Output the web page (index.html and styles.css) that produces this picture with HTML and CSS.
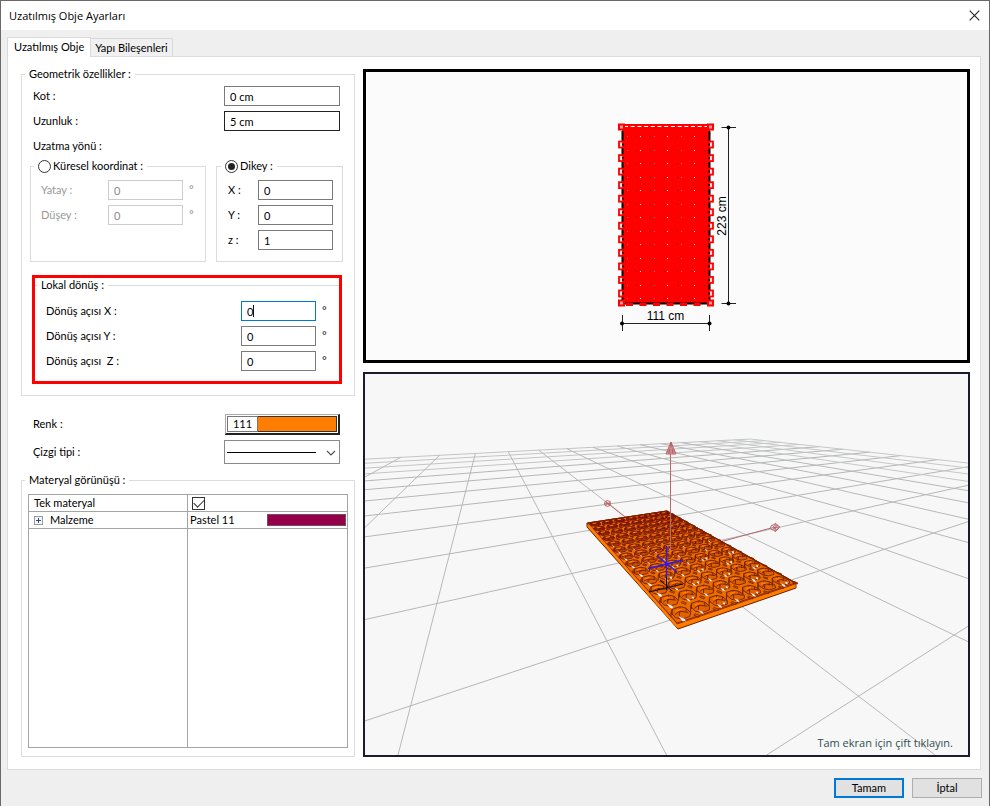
FILE: index.html
```html
<!DOCTYPE html>
<html lang="tr">
<head>
<meta charset="utf-8">
<title>Uzatılmış Obje Ayarları</title>
<link rel="stylesheet" href="styles.css">
</head>
<body>
<main class="dialog">
  <header class="titlebar">
    <h1 class="title">Uzatılmış Obje Ayarları</h1>
    <button class="close" type="button" aria-label="Kapat"><svg width="11" height="11" viewBox="0 0 11 11"><path d="M.7.7l9.6 9.6M10.3.7L.7 10.3" fill="none" stroke="#222" stroke-width="1.1"/></svg></button>
  </header>
  <nav class="tabs" role="tablist">
    <button class="tab tab-active" type="button" role="tab" aria-selected="true">Uzatılmış Obje</button>
    <button class="tab" type="button" role="tab" aria-selected="false">Yapı Bileşenleri</button>
  </nav>
  <div class="page">
    <form class="form">
      <fieldset class="group geometry">
        <legend>Geometrik özellikler :</legend>
        <div class="row"><label for="kot">Kot :</label><input class="wide" id="kot" type="text" value="0 cm"></div>
        <div class="row"><label for="uzunluk">Uzunluk :</label><input class="wide strong" id="uzunluk" type="text" value="5 cm"></div>
        <div class="row">Uzatma yönü :</div>
        <div class="directions">
          <fieldset class="group spherical">
            <legend><label class="choice"><input type="radio" name="yon">Küresel koordinat :</label></legend>
            <div class="field"><label for="yatay">Yatay :</label><input id="yatay" type="text" value="0" disabled><span class="degree">°</span></div>
            <div class="field"><label for="dusey">Düşey :</label><input id="dusey" type="text" value="0" disabled><span class="degree">°</span></div>
          </fieldset>
          <fieldset class="group vertical">
            <legend><label class="choice"><input type="radio" name="yon" checked>Dikey :</label></legend>
            <div class="field"><label for="vx">X :</label><input id="vx" type="text" value="0"></div>
            <div class="field"><label for="vy">Y :</label><input id="vy" type="text" value="0"></div>
            <div class="field"><label for="vz">z :</label><input id="vz" type="text" value="1"></div>
          </fieldset>
        </div>
        <div class="highlight">
          <fieldset class="group rotation">
            <legend>Lokal dönüş :</legend>
            <div class="field"><label for="rx">Dönüş açısı X :</label><span class="focused"><input id="rx" type="text" value="0"></span><span class="degree">°</span></div>
            <div class="field"><label for="ry">Dönüş açısı Y :</label><input id="ry" type="text" value="0"><span class="degree">°</span></div>
            <div class="field"><label for="rz">Dönüş açısı&nbsp; Z :</label><input id="rz" type="text" value="0"><span class="degree">°</span></div>
          </fieldset>
        </div>
      </fieldset>
      <div class="looks">
        <div class="row"><label for="renk">Renk :</label><button class="color" id="renk" type="button"><span class="color-number">111</span><span class="color-fill"></span></button></div>
        <div class="row"><label for="cizgi">Çizgi tipi :</label>
          <span class="linetype"><select id="cizgi"><option value="1" aria-label="1"></option></select>
          <svg viewBox="0 0 114 22" aria-hidden="true"><path d="M2 11.500H91" stroke="#000"/><path d="M102 10l4 4 4-4" fill="none" stroke="#555" stroke-width="1.2"/></svg></span>
        </div>
      </div>
      <fieldset class="group material">
        <legend>Materyal görünüşü :</legend>
        <table class="grid">
          <tr><th scope="row"><label class="cell" for="tek">Tek materyal</label></th><td><span class="cell"><input id="tek" type="checkbox" checked></span></td></tr>
          <tr><th scope="row"><span class="cell"><svg class="expand" viewBox="0 0 9 9" aria-hidden="true"><rect x=".5" y=".5" width="8" height="8" fill="#f6f6f6" stroke="#999"/><path d="M2 4.500h5M4.500 2v5" stroke="#33478c"/></svg>Malzeme</span></th><td><span class="cell">Pastel 11<span class="swatch"></span></span></td></tr>
          <tr class="rest"><td></td><td></td></tr>
        </table>
      </fieldset>
    </form>
    <div class="views">
      <div class="view plan"><svg id="plan" viewBox="366 72 601 288"></svg></div>
      <div class="view scene"><svg id="scene" viewBox="365 374 603 381" preserveAspectRatio="xMidYMid slice"></svg><p class="hint">Tam ekran için çift tıklayın.</p></div>
    </div>
  </div>
  <footer class="actions">
    <button class="action primary" type="button">Tamam</button>
    <button class="action" type="button">İptal</button>
  </footer>
</main>
<script src="views.js"></script>
</body>
</html>
```
FILE: styles.css
```css
* { box-sizing: border-box; }
body { margin: 0; font: 11px/14px Lato, "Liberation Sans", sans-serif; color: #000; }
button, input, select { font: inherit; color: inherit; margin: 0; border-radius: 0; }
button { padding: 0; }
.dialog { display: flex; flex-direction: column; min-height: 100vh; border: 1px solid #6a686b; background: #efefef; }
.titlebar { display: flex; align-items: center; justify-content: space-between; height: 29px; padding: 0 9px 0 8px; background: #fff; }
.title { margin: 0; font: 11px/14px "Open Sans", sans-serif; }
.close { display: flex; border: 0; background: none; }
.tabs { display: flex; align-items: flex-end; height: 26px; padding-left: 6px; }
.tab { height: 18px; padding: 0 4px; border: 1px solid #d9d9d9; border-bottom: 0; background: #f0f0f0; }
.tab + .tab { border-left: 0; }
.tab-active { position: relative; height: 20px; padding: 0 6px 1px; margin-bottom: -1px; background: #fff; }
.page { flex: 1; display: flex; gap: 8px; margin: 0 8px 0 6px; padding: 10px 10px 12px 13px; border: 1px solid #dcdcdc; background: #fff; }
.form { flex: 0 0 334px; display: flex; flex-direction: column; }
.group { min-width: 0; margin: 0; padding: 0; border: 1px solid #dcdcdc; }
legend { height: 14px; padding: 0 4px; }
.geometry { padding: 5px 11px 11px 8px; }
.geometry > legend { margin-left: -5px; }
.row { display: flex; align-items: center; justify-content: space-between; height: 20px; margin-bottom: 5px; padding: 0 3px; }
input[type="text"] { width: 75px; height: 20px; padding: 0 5px; border: 1px solid #7a7a7a; background: #fff; outline: 0; }
input[type="text"].wide { width: 116px; }
input[type="text"].strong { border-color: #222; }
input[type="text"]:disabled { border-color: #ccc; color: #8a8a8a; }
.directions { display: flex; gap: 10px; margin-top: -2px; }
.spherical { flex: 0 0 176px; padding: 7px 0 12px 10px; }
.vertical { flex: 1; padding: 7px 0 11px 11px; }
.directions legend { margin-left: -7px; }
.field { display: flex; align-items: center; height: 20px; }
.field + .field { margin-top: 5px; }
.spherical .field label { width: 67px; color: #999; }
.spherical .degree { color: #888; }
.vertical .field label { width: 30px; }
.rotation .field label { width: 195px; }
.degree { align-self: flex-start; margin-left: 6px; padding-top: 2px; font-family: "Open Sans", sans-serif; }
.choice { display: flex; align-items: center; gap: 2px; }
input[type="radio"] { appearance: none; display: grid; place-items: center; width: 13px; height: 13px; border: 1px solid #333; border-radius: 50%; background: #fff; }
input[type="radio"]:checked::after { content: ""; width: 7px; height: 7px; border-radius: 50%; background: #222; }
.highlight { margin: 13px 1px 0 2px; border: 3px solid #f00; }
.rotation { border-width: 1px 0 0; padding: 9px 0 10px 11px; }
.rotation legend { margin-left: -9px; }
.focused { position: relative; display: flex; }
.focused input[type="text"] { border-color: #0078d7; }
.focused::after { content: ""; position: absolute; left: 12px; top: 4px; width: 1px; height: 12px; background: #111; }
.looks { padding: 17px 12px 0 9px; }
.looks .row { height: 22px; margin-bottom: 6px; }
.color { display: flex; width: 115px; height: 21px; padding: 1px; border: 1px solid #aaa; border-width: 1px 2px 2px 1px; border-right-color: #222; border-bottom-color: #222; background: #fff; }
.color-number { width: 31px; height: 16px; border: 1px solid #777; }
.color-fill { flex: 1; height: 16px; border: 1px solid #333; border-left: 0; background: #ff7d00; }
.linetype { position: relative; display: flex; }
.linetype select { appearance: none; width: 116px; height: 24px; border: 1px solid #8a8a8a; background: #fff; }
.linetype svg { position: absolute; inset: 1px; pointer-events: none; }
.material { flex: 1; display: flex; margin-top: 4px; padding: 7px 6px 6px; }
.material legend { margin-left: -3px; }
.grid { width: 100%; height: 254px; border: 1px solid #a5a5a5; border-collapse: separate; border-spacing: 0; table-layout: fixed; }
.grid th, .grid td { padding: 0 1px 0 2px; border-bottom: 1px solid #a5a5a5; text-align: left; font-weight: 400; }
.grid th { padding-left: 5px; }
.grid th, .grid td:first-child { border-right: 1px solid #a5a5a5; }
.grid .rest { height: 100%; }
.grid .rest td { border-bottom: 0; }
.cell { display: flex; align-items: center; height: 16px; }
.expand { width: 9px; height: 9px; margin-right: 7px; }
.swatch { width: 79px; height: 12px; margin-left: auto; border: 1px solid #7b4b62; background: #940049; }
input[type="checkbox"] { appearance: none; display: grid; place-items: center; width: 13px; height: 13px; margin-left: 2px; border: 1px solid #333; background: #fff; }
input[type="checkbox"]:checked::after { content: ""; width: 9px; height: 5px; border: solid #333; border-width: 0 0 1px 1px; transform: translateY(-1px) rotate(-45deg); }
.views { flex: 1; min-width: 0; display: grid; grid-template-rows: 294fr 385fr; gap: 9px; padding-top: 2px; }
.view { position: relative; min-width: 0; min-height: 0; overflow: hidden; }
.view svg { display: block; width: 100%; height: 100%; }
.plan { border: 3px solid #000; background: #fbfbfb; }
.plan text { font: 12px "Liberation Sans", Arial, sans-serif; text-anchor: middle; }
.scene { border: 2px solid #1b1b30; background: #f7f7f7; }
.hint { position: absolute; right: 15px; bottom: 5px; margin: 0; font: 11px/14px "Open Sans", sans-serif; color: #2f4f4f; }
.actions { display: flex; justify-content: flex-end; gap: 8px; padding: 8px 7px; }
.action { width: 70px; height: 20px; border: 1px solid #adadad; background: #e1e1e1; }
.primary { border: 2px solid #0078d7; }
```
FILE: views.js
```js
const NS = "http://www.w3.org/2000/svg";
function add(parent, tag, attrs, text) {
  const el = document.createElementNS(NS, tag);
  for (const key in attrs) el.setAttribute(key, attrs[key]);
  if (text) el.textContent = text;
  parent.appendChild(el);
  return el;
}
function path(parent, d, stroke, width, fill) {
  return add(parent, "path", { d, stroke: stroke || "none", "stroke-width": width || 1, fill: fill || "none" });
}

/* Plan view: the selected plate and its two dimensions */
const plan = document.getElementById("plan");
add(plan, "rect", { x: 622, y: 127, width: 88, height: 177, fill: "#f00" });
path(plan, "M622.5 131V303M709.5 131V303", "#000", 2);
path(plan, "M622 303.5H710", "#000", 2);
for (let i = 1; i < 13; i++) {
  const y = 131 + 13.54 * i;
  for (const x of [621, 711]) {
    add(plan, "rect", { x: x - 2, y: y - 3, width: 4, height: 6, fill: "#fdd", stroke: "#f00", "stroke-width": 1.8 });
    add(plan, "rect", { x: x === 621 ? 622 : 708, y: y - 1, width: 2, height: 2, fill: "#300" });
  }
}
for (let i = 0; i < 13; i++) {
  const y = 136 + 13.5 * i;
  [627, 636, 640, 650, 653.5, 663.5, 667, 677, 680.5, 690.5, 694, 704].forEach((x, n) => {
    add(plan, "rect", { x: Math.round(x), y: Math.round(y), width: 1, height: 1, fill: n % 2 ? "#700" : n % 4 ? "#ffe0e0" : "#d66" });
  });
}
path(plan, "M619 126H712", "#f00", 4);
path(plan, "M624 126.5H709", "#fff", 1).setAttribute("stroke-dasharray", "4 2.7");
path(plan, "M626 304.5H708", "#f00", 3).setAttribute("stroke-dasharray", "7 6.5");
for (const [x, y] of [[621, 127.5], [710, 127.5], [621, 303.5], [710, 303.5]]) {
  add(plan, "rect", { x: x - 2, y: y - 3, width: 5, height: 5, fill: "#f99", stroke: "#f00", "stroke-width": 2 });
}
path(plan, "M728.5 127V304M721.5 127.5H736M721.5 303.5H736M622 323.5H710M622.5 315V331M709.5 315V331", "#222");
for (const [x, y] of [[728.5, 127.5], [728.5, 303.5], [622, 323.5], [709.5, 323.5]]) {
  add(plan, "circle", { cx: x, cy: y, r: 2, fill: "#000" });
}
add(plan, "text", { x: 665.5, y: 320 }, "111 cm");
add(plan, "text", { transform: "translate(726 216) rotate(-90)" }, "223 cm");

/* Scene: ground lines run to two vanishing points on one horizon */
const scene = document.getElementById("scene");
const HORIZON = 410, FRONT = 755;
const vanishA = 1306, vanishB = 486.5;
const baseA = k => 766.7 - 505 * k;
const baseB = j => 398 + 268.5 * j;
function cross(k, j) {
  const a = vanishA - baseA(k), b = vanishB - baseB(j);
  const t = (vanishA - vanishB) / (a - b);
  return [vanishB - b * t, HORIZON + (FRONT - HORIZON) * t];
}
const ground = add(scene, "g", {});
for (let k = 0; k <= 12; k++) {
  const far = cross(k, 12);
  const slope = (FRONT - HORIZON) / (vanishA - baseA(k));
  const x = Math.max(360, baseA(k));
  path(ground, `M${x} ${HORIZON + (vanishA - x) * slope}L${far}`, k > 8 ? "#c3c5c4" : "#b5b7b6");
}
for (let j = -4; j <= 12; j++) {
  path(ground, `M${baseB(j)} ${FRONT}L${cross(12, j)}`, j > 8 ? "#c6c8c7" : "#b7b9b8");
}

/* Plate: u runs along the short side, v along the long side */
const A = [587, 523], B = [667, 511], C = [796, 583], D = [677, 623];
function plate(u, v) {
  const dx1 = B[0] - C[0], dx2 = D[0] - C[0], sx = A[0] - B[0] + C[0] - D[0];
  const dy1 = B[1] - C[1], dy2 = D[1] - C[1], sy = A[1] - B[1] + C[1] - D[1];
  const det = dx1 * dy2 - dx2 * dy1;
  const g = (sx * dy2 - dx2 * sy) / det, h = (dx1 * sy - sx * dy1) / det;
  const w = g * u + h * v + 1;
  return [
    ((B[0] - A[0] + g * B[0]) * u + (D[0] - A[0] + h * D[0]) * v + A[0]) / w,
    ((B[1] - A[1] + g * B[1]) * u + (D[1] - A[1] + h * D[1]) * v + A[1]) / w
  ];
}
function mix(from, to, t) {
  return `rgb(${from.map((c, n) => Math.round(c + (to[n] - c) * Math.min(1, t)))})`;
}
path(scene, "M605 501L625 517M720 542L771 528", "#b8686a");
path(scene, "M587 523L667 511L796 583V588L678 629L587 527Z", "#6b1c00", 1, "#ff7a00");
path(scene, "M588 523L667 511L795 583L677 623Z", "#8c2500", 1, "#ed6c00");
const cells = add(scene, "g", { "stroke-linejoin": "round" });
const COLS = 7, ROWS = 13;
for (let j = 0; j < ROWS; j++) {
  for (let i = 0; i < COLS; i++) {
    const t = (j + .5) / ROWS;
    const at = (x, y) => plate((i + x) / COLS, (j + y) / ROWS);
    const wall = 2 + 4 * t;
    const edge = mix([112, 14, 8], [110, 36, 0], t);
    const inner = mix([138, 32, 6], [226, 98, 0], t * 1.3);
    /* eight-sided opening with its rear walls */
    path(cells, `M${at(.3, .12)}L${at(.7, .12)}L${at(.88, .32)}L${at(.88, .68)}L${at(.7, .88)}L${at(.3, .88)}L${at(.12, .68)}L${at(.12, .32)}Z`, edge, .9, inner);
    path(cells, `M${at(.3, .12)}v${wall}M${at(.7, .12)}v${wall}M${at(.12, .32)}v${wall}M${at(.88, .32)}v${wall * .6}`, edge, .9);
    path(cells, `M${at(.2, .5)}L${at(.5, .38)}L${at(.8, .62)}M${at(.5, .38)}v${wall * .8}`, edge, .9);
    path(cells, `M${at(.35, .3)}L${at(.65, .3)}`, "#ff7a00", 1 + t);
    /* small opening at the joint */
    path(cells, `M${at(.9, .88)}L${at(1, .82)}L${at(1.1, 1)}L${at(1, 1.1)}Z`, edge, .8, inner);
    const glint = i === 0 ? t > .3 : t > .42 && (i < 4 || (i + j) % 2 === 0);
    if (glint) {
      const m = at(.28, .68), size = (i === 0 ? 1.5 : 1) * t;
      path(cells, `M${m}l${4 * size} ${1.5 * size}l${1.5 * size} ${2.5 * size}l${-3 * size} ${-size}Z`, "none", 0, "#f2efff");
    }
    if (t > .6 && i > 0 && i % 2 === j % 2) {
      const m = at(.6, .7);
      path(cells, `M${m}l2 0v2.4l-2 -1Z`, "none", 0, "#f7f2f5");
    }
  }
}
path(scene, "M588 524L677 624L795 584", "#752000", .8);
path(scene, "M588 525L677.5 626.5L795.500 586", "#ff7d00", 2.4);
path(scene, "M588 523L667 511L796 583", "#7c1c00", 1);

/* Axes and origin marks */
path(scene, "M670.5 453V550", "#b86a70");
path(scene, "M671 442L666 454H676ZM671 442L669 454M671 442L673 454M668 450H674M667 452H675", "#b86066", 1, "#e2b4b6");
for (const [x, y] of [[607.5, 503.5], [774.5, 527.5]]) {
  add(scene, "ellipse", { cx: x, cy: y, rx: x > 700 ? 4 : 3, ry: 2.8, stroke: "#b86066", fill: "none" });
  path(scene, `M${x - 2} ${y + 2}l5 -4m-5 0l4 4m-5 -2h6`, "#b86066", .8);
}
path(scene, "M780 527L775 523V532Z", "#b86066", .8);
path(scene, "M666.5 546V581M657 556L677 572M648 568.5L683 560", "#2a18f5", 1.3);
path(scene, "M649 592L683 584M660 580L672 591M666.5 577V590", "#160800");
```
